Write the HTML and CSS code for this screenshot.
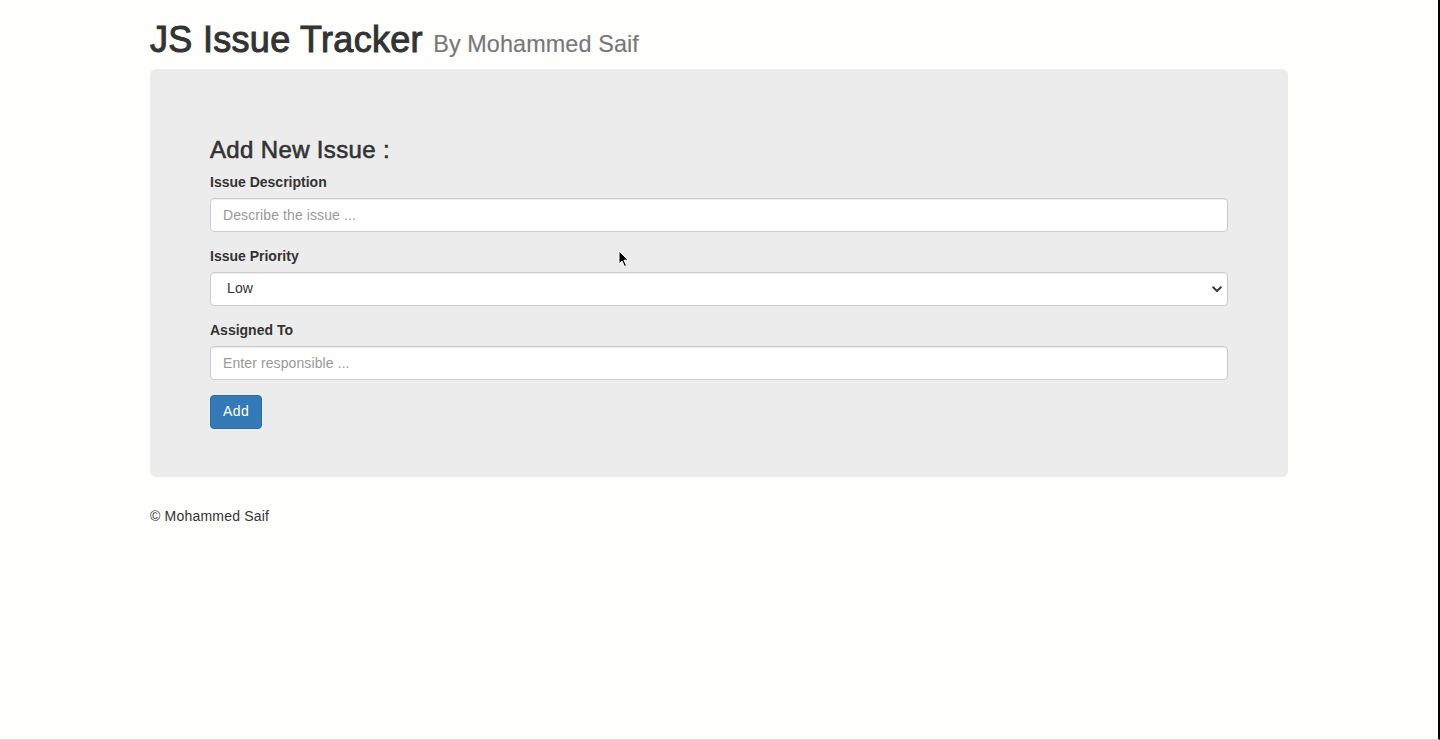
FILE: index.html
```html
<!DOCTYPE html>
<html lang="en">
<head>
<meta charset="utf-8">
<title>JS Issue Tracker</title>
<link rel="stylesheet" href="styles.css">
</head>
<body>
<div class="container">
  <h1 class="title">JS Issue Tracker <small>By Mohammed Saif</small></h1>
  <div class="jumbotron">
    <h3 class="form-title">Add New Issue :</h3>
    <form class="issue-form">
      <div class="form-group">
        <label for="desc">Issue Description</label>
        <input id="desc" class="form-control" type="text" placeholder="Describe the issue ...">
      </div>
      <div class="form-group">
        <label for="prio">Issue Priority</label>
        <div class="select-wrap">
          <select id="prio" class="form-control select">
            <option>Low</option>
            <option>Medium</option>
            <option>High</option>
          </select>
          <svg class="chevron" width="10" height="7" viewBox="0 0 10 7"><path d="M1.2 1.3 L5 5.1 L8.8 1.3" fill="none" stroke="#333" stroke-width="2" stroke-linecap="round" stroke-linejoin="round"/></svg>
          <svg class="cursor" width="12" height="18" viewBox="0 0 12 18"><path d="M1 1 L1 14 L4 11 L6.5 16.5 L8.5 15.6 L6 10.2 L10.2 10.2 Z" fill="#000" stroke="#fff" stroke-width="1"/></svg>
        </div>
      </div>
      <div class="form-group">
        <label for="assign">Assigned To</label>
        <input id="assign" class="form-control" type="text" placeholder="Enter responsible ...">
      </div>
      <button type="button" class="btn btn-primary">Add</button>
    </form>
  </div>
  <div class="footer">© Mohammed Saif</div>
</div>
</body>
</html>
```

FILE: styles.css
```css
* { box-sizing: border-box; }
html, body { margin: 0; padding: 0; }
body {
  font-family: "Liberation Sans", Arial, Helvetica, sans-serif;
  font-size: 14px;
  line-height: 1.42857;
  letter-spacing: 0.2px;
  color: #333;
  background: #fefefd;
  min-height: 740px;
  border-right: 2px solid #000;
  border-bottom: 1px solid #d8d8d8;
}
.container {
  width: 1168px;
  margin: 0 auto;
  padding: 0 15px;
}
.title {
  font-size: 36px;
  font-weight: 400;
  -webkit-text-stroke: 1px #333;
  letter-spacing: 0.3px;
  line-height: 1.1;
  margin: 20px 0 9px;
  color: #333;
}
.title small {
  font-size: 65%;
  font-weight: 400;
  color: #777;
  letter-spacing: 0.1px;
  -webkit-text-stroke: 0.15px #777;
}
.jumbotron {
  background: #ececec;
  border-radius: 6px;
  padding: 48px 60px;
  margin-bottom: 30px;
}
.form-title {
  font-size: 24px;
  font-weight: 400;
  -webkit-text-stroke: 0.6px #333;
  letter-spacing: 0.35px;
  line-height: 1.1;
  margin: 20px 0 10px;
}
.issue-form { margin: 0; }
.form-group { margin-bottom: 15px; }
label {
  display: block;
  font-weight: 700;
  margin-bottom: 5px;
  font-size: 14px;
  letter-spacing: 0;
}
.form-control {
  display: block;
  width: 100%;
  height: 34px;
  padding: 6px 12px;
  font-family: inherit;
  font-size: 14px;
  line-height: 1.42857;
  letter-spacing: 0.1px;
  color: #555;
  background: #fff;
  border: 1px solid #ccc;
  border-radius: 4px;
  box-shadow: inset 0 1px 1px rgba(0,0,0,.075);
  outline: none;
}
.form-control::placeholder { color: #999; }
.select-wrap { position: relative; }
.select {
  -webkit-appearance: none;
  appearance: none;
  padding-left: 16px;
  color: #333;
}
.chevron {
  position: absolute;
  right: 6px;
  top: 14px;
  pointer-events: none;
}
.cursor {
  position: absolute;
  left: 408px;
  top: -22px;
  pointer-events: none;
}
.btn {
  display: inline-block;
  padding: 6px 12px;
  font-family: inherit;
  font-size: 14px;
  line-height: 1.42857;
  letter-spacing: 0.4px;
  border: 1px solid transparent;
  border-radius: 4px;
  cursor: pointer;
}
.btn-primary {
  color: #fff;
  background: #337ab7;
  border-color: #2e6da4;
}
.footer {
  font-size: 14px;
  color: #333;
}
```
